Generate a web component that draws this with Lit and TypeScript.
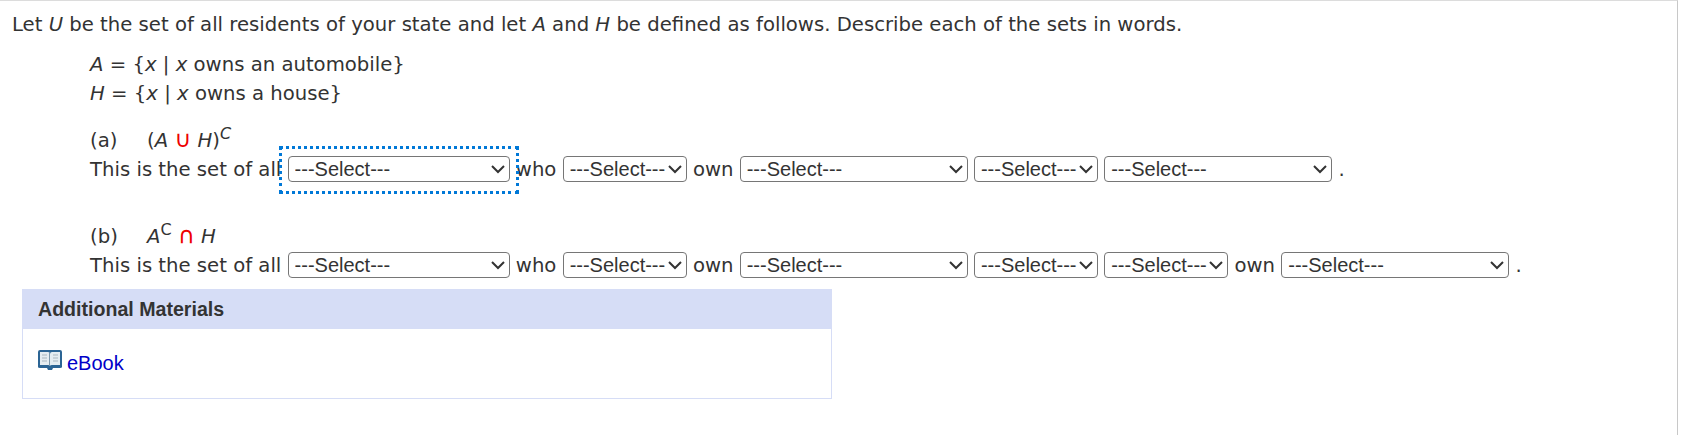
import { LitElement, html, css } from 'lit'
import { customElement } from 'lit/decorators.js'

const pick = (size: string) => html`<select class=${size}><option>---Select---</option></select>`

@customElement('app-root')
export class AppRoot extends LitElement {
  static styles = css`
    :host {
      display: block;
      font-family: 'DejaVu Sans', Verdana, sans-serif;
      font-size: 19.67px;
      color: #333;
    }

    .page {
      box-sizing: border-box;
      width: 1678px;
      height: 435px;
      border-top: 1px solid #dcdcdc;
      border-right: 1px solid #c8c8c8;
      padding: 9px 12px 0;
    }

    p {
      margin: 0;
      line-height: 30px;
    }

    .sets {
      margin: 10px 0 0 78px;
    }

    .sets p {
      line-height: 29px;
    }

    .part {
      margin-left: 78px;
    }

    .part.a {
      margin-top: 19px;
    }

    .part.b {
      margin-top: 37px;
    }

    .part p {
      white-space: nowrap;
    }

    .part.a .title {
      line-height: 28px;
    }

    .part.b .title {
      line-height: 29px;
    }

    .label {
      display: inline-block;
      width: 57px;
    }

    sup {
      font-size: 16px;
      line-height: 0;
    }

    .red {
      color: #e00;
      font-size: 23px;
      line-height: 0;
    }

    select {
      appearance: none;
      box-sizing: border-box;
      font-family: 'Liberation Sans', Arial, sans-serif;
      font-size: 20px;
      color: #333;
      height: 26px;
      border: 1px solid #767676;
      border-radius: 4px;
      padding: 0 0 0 6px;
      background: #fff url("data:image/svg+xml,%3Csvg xmlns='http://www.w3.org/2000/svg' width='16' height='10'%3E%3Cpath d='M2 2l6 6 6-6' fill='none' stroke='%23333' stroke-width='2'/%3E%3C/svg%3E") no-repeat right 3px center;
    }

    select.wide {
      width: 228px;
    }

    select.mid {
      width: 222px;
    }

    select.narrow {
      width: 124px;
    }

    .focus {
      position: relative;
      display: inline-block;
    }

    .focus::after {
      content: '';
      position: absolute;
      inset: -9px;
      border: 3px dotted #0078d7;
      pointer-events: none;
    }

    .materials {
      box-sizing: border-box;
      width: 810px;
      margin: 8px 0 0 10px;
      border: 1px solid #d6ddf6;
      border-top: none;
      font-family: 'Liberation Sans', Arial, sans-serif;
    }

    .materials h3 {
      margin: 0;
      background: #d6ddf6;
      font-size: 19.6px;
      line-height: 40px;
      padding: 0 15px;
    }

    .body {
      display: flex;
      align-items: center;
      gap: 5px;
      height: 69px;
      padding: 0 15px;
      box-sizing: border-box;
    }

    .body svg {
      margin-bottom: 6px;
    }

    a {
      color: #0000c8;
      text-decoration: none;
      font-size: 20px;
    }
  `

  render() {
    return html`
      <div class="page">
        <p>Let <i>U</i> be the set of all residents of your state and let <i>A</i> and <i>H</i> be defined as follows. Describe each of the sets in words.</p>
        <div class="sets">
          <p><i>A</i> = {<i>x</i> | <i>x</i> owns an automobile}</p>
          <p><i>H</i> = {<i>x</i> | <i>x</i> owns a house}</p>
        </div>
        <div class="part a">
          <p class="title"><span class="label">(a)</span>(<i>A</i> <span class="red">∪</span> <i>H</i>)<sup><i>C</i></sup></p>
          <p>This is the set of all <span class="focus">${pick('mid')}</span> who ${pick('narrow')} own ${pick('wide')} ${pick('narrow')} ${pick('wide')} .</p>
        </div>
        <div class="part b">
          <p class="title"><span class="label">(b)</span><i>A</i><sup>C</sup> <span class="red">∩</span> <i>H</i></p>
          <p>This is the set of all ${pick('mid')} who ${pick('narrow')} own ${pick('wide')} ${pick('narrow')} ${pick('narrow')} own ${pick('wide')} .</p>
        </div>
        <div class="materials">
          <h3>Additional Materials</h3>
          <div class="body">
            <svg width="24" height="21" viewBox="0 0 24 21">
              <path d="M0 2q0-2 2-2h20q2 0 2 2v15q0 1-2 1h-7l-1 2h-4l-1-2H2q-2 0-2-1z" fill="#2b6494"/>
              <path d="M2 2h8q2 0 2 2 0-2 2-2h8v13h-8q-2 0-2 1 0-1-2-1H2z" fill="#e4ecf1"/>
              <path d="M11.500 3v13" stroke="#7c97ab"/>
              <path d="M4 5h5M4 8h5M4 11h5M15 5h5M15 8h5M15 11h5" stroke="#a9b6bf"/>
            </svg>
            <a href="#">eBook</a>
          </div>
        </div>
      </div>
    `
  }
}

declare global {
  interface HTMLElementTagNameMap {
    'app-root': AppRoot
  }
}
